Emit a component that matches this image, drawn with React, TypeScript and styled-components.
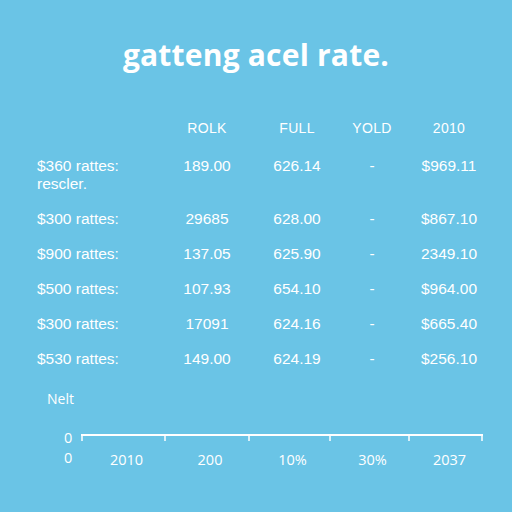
import React from "react";
import styled, { createGlobalStyle } from "styled-components";

const Global = createGlobalStyle`
  html, body { margin: 0; padding: 0; }
  body { background: #6ac4e6; }
`;

const Page = styled.div`
  width: 512px;
  height: 512px;
  background: #6ac4e6;
  color: #ffffff;
  font-family: "Open Sans", "Liberation Sans", sans-serif;
  display: flex;
  flex-direction: column;
  box-sizing: border-box;
  padding-top: 35px;
  overflow: hidden;
`;

const Title = styled.h1`
  margin: 0;
  text-align: center;
  font-family: "Open Sans", sans-serif;
  font-weight: 700;
  font-size: 30px;
  line-height: 40px;
  letter-spacing: 0.2px;
`;

const Table = styled.div`
  display: grid;
  grid-template-columns: 130px 80px 100px 50px 104px;
  row-gap: 17px;
  margin: 44px 0 0 37px;
  font-family: "Liberation Sans", Arial, sans-serif;
  font-size: 15.5px;
  line-height: 18px;
`;

const Head = styled.div`
  text-align: center;
  font-size: 14px;
  letter-spacing: 0.3px;
  margin-bottom: 3px;
`;

const Label = styled.div`
  white-space: nowrap;
`;

const Cell = styled.div`
  text-align: center;
`;

const Axis = styled.div`
  display: grid;
  grid-template-columns: 21px 402px;
  margin: 21px 0 0 60px;
  font-size: 14.5px;
`;

const Caption = styled.div`
  grid-column: 1 / span 2;
  margin-left: -13px;
  font-size: 14px;
  line-height: 20px;
  margin-bottom: 19px;
`;

const Zero = styled.div`
  padding-left: 4px;
  line-height: 20px;
`;

const TickLabels = styled.div`
  display: grid;
  grid-template-columns: 83px 84px 81px 79px 75px;
  padding-left: 4px;
  line-height: 20px;
  margin-top: 2px;
`;

const TickLabel = styled.div`
  text-align: center;
`;

const heads = ["ROLK", "FULL", "YOLD", "2010"];

const rows: { label: React.ReactNode; v: string[] }[] = [
  { label: <>$360 rattes:<br />rescler.</>, v: ["189.00", "626.14", "-", "$969.11"] },
  { label: "$300 rattes:", v: ["29685", "628.00", "-", "$867.10"] },
  { label: "$900 rattes:", v: ["137.05", "625.90", "-", "2349.10"] },
  { label: "$500 rattes:", v: ["107.93", "654.10", "-", "$964.00"] },
  { label: "$300 rattes:", v: ["17091", "624.16", "-", "$665.40"] },
  { label: "$530 rattes:", v: ["149.00", "624.19", "-", "$256.10"] },
];

const ticks = [0, 83, 167, 248, 327, 401];

export default function App() {
  return (
    <Page>
      <Global />
      <Title>gatteng acel rate.</Title>
      <Table>
        <div />
        {heads.map((h) => (
          <Head key={h}>{h}</Head>
        ))}
        {rows.map((r, i) => (
          <React.Fragment key={i}>
            <Label>{r.label}</Label>
            {r.v.map((v, j) => (
              <Cell key={j}>{v}</Cell>
            ))}
          </React.Fragment>
        ))}
      </Table>
      <Axis>
        <Caption>Nelt</Caption>
        <Zero>0</Zero>
        <svg width="402" height="20" viewBox="0 0 402 20">
          <line x1="0" y1="7" x2="402" y2="7" stroke="#fff" strokeWidth="2" />
          {ticks.map((t, i) => (
            <line
              key={i}
              x1={i === ticks.length - 1 ? 401 : t + 1}
              y1="6"
              x2={i === ticks.length - 1 ? 401 : t + 1}
              y2="13"
              stroke="#fff"
              strokeWidth="1.5"
            />
          ))}
        </svg>
        <Zero>0</Zero>
        <TickLabels>
          {["2010", "200", "10%", "30%", "2037"].map((l) => (
            <TickLabel key={l}>{l}</TickLabel>
          ))}
        </TickLabels>
      </Axis>
    </Page>
  );
}
